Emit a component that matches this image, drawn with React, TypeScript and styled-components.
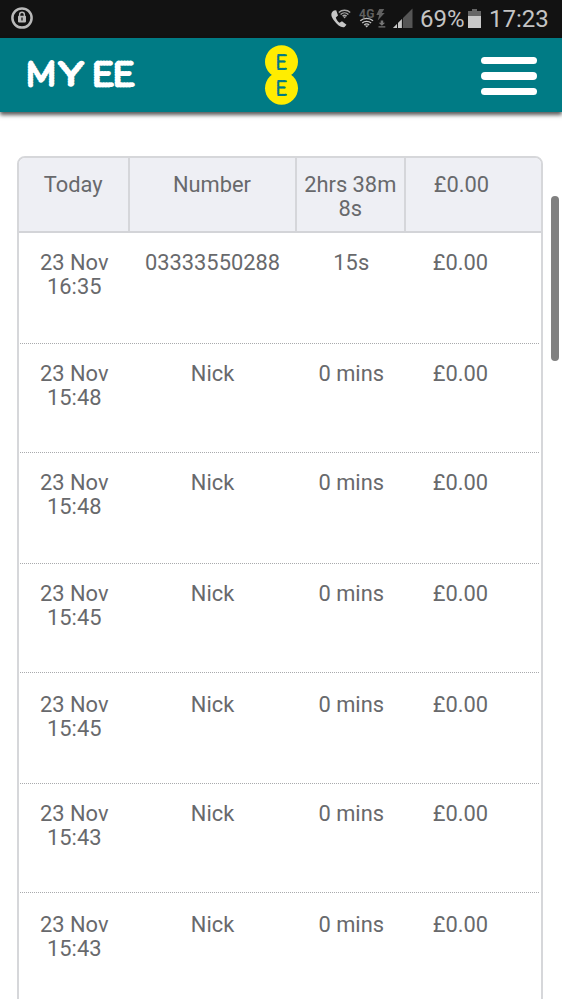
import React from 'react';
import styled, { createGlobalStyle } from 'styled-components';

const GlobalStyle = createGlobalStyle`
  * { box-sizing: border-box; }
  body { margin: 0; background: #fff; overflow: hidden; }
`;

const Screen = styled.div`
  position: relative;
  width: 562px;
  height: 999px;
  overflow: hidden;
  background: #fff;
  color: #68696c;
  font-family: Roboto, sans-serif;
`;

const StatusBar = styled.div`
  display: flex;
  align-items: center;
  height: 38px;
  padding: 0 14px 2px 11px;
  background: #121212;
  color: #c4c4c4;
`;

const StatusIcons = styled.svg`
  display: block;
  margin: 2px 0 0 auto;
`;

const StatusText = styled.span<{ $width: number }>`
  width: ${p => p.$width}px;
  margin-top: 2px;
  font-size: 24px;
  line-height: 36px;
  white-space: nowrap;
`;

const Battery = styled.svg`
  margin: 1px 8px 0 4px;
`;

const AppBar = styled.header`
  display: flex;
  align-items: center;
  justify-content: space-between;
  height: 74px;
  padding: 0 25px 0 20px;
  background: #007b85;
  box-shadow: 0 3px 4px rgba(0, 0, 0, 0.65);
`;

const LogoSlot = styled.div<{ $width: number; $shift?: number }>`
  width: ${p => p.$width}px;
  margin-left: ${p => p.$shift ?? 0}px;
  height: 74px;
  svg { display: block; }
`;

const MenuButton = styled.button`
  display: flex;
  flex-direction: column;
  gap: 8px;
  width: 56px;
  margin: 2px 0 0;
  padding: 0;
  border: 0;
  background: none;
`;

const MenuLine = styled.span`
  height: 7.6px;
  border-radius: 4px;
  background: #fff;
`;

const CallTable = styled.main`
  width: 526px;
  height: 860px;
  margin: 44px 0 0 17px;
  border: 2px solid #d6d7da;
  border-radius: 8px 8px 0 0;
  overflow: hidden;
`;

const columns = '110.5px 167px 109.5px 112px';

const HeaderRow = styled.div`
  display: grid;
  grid-template-columns: ${columns};
  height: 75px;
  background: #eeeff4;
  border-bottom: 2px solid #d3d4d8;
`;

const Row = styled.div<{ $height: number }>`
  display: grid;
  grid-template-columns: ${columns};
  height: ${p => p.$height}px;
  margin: 0 2px 0 1px;
  border-bottom: 1px dotted #a9aaad;
`;

const Cell = styled.div<{ $header?: boolean; $last?: boolean }>`
  padding: ${p => (p.$header ? '15px 4px 0' : '18px 15px 0')};
  padding-right: ${p => (p.$last ? '5px' : '4px')};
  border-right: ${p => (p.$header && !p.$last ? '2px solid #d5d6da' : '0')};
  font-size: 21.85px;
  line-height: 23.5px;
  text-align: center;
`;

const CallCell = styled(Cell)<{ $low?: boolean }>`
  padding: ${p => (p.$low ? 20 : 18)}px 15.5px 0 13.5px;
`;

const NumberCell = styled(CallCell)`
  padding-left: 0;
  padding-right: 3px;
`;

const PriceCell = styled(CallCell)`
  padding-right: 17px;
  padding-left: 12px;
`;

const ScrollThumb = styled.div`
  position: absolute;
  top: 196px;
  right: 3px;
  width: 8px;
  height: 165px;
  border-radius: 4px;
  background: #808080;
`;

const calls = [
  { time: '16:35', who: '03333550288', length: '15s', height: 111 },
  { time: '15:48', who: 'Nick', length: '0 mins', height: 109 },
  { time: '15:48', who: 'Nick', length: '0 mins', height: 111 },
  { time: '15:45', who: 'Nick', length: '0 mins', height: 109 },
  { time: '15:45', who: 'Nick', length: '0 mins', height: 111, low: true },
  { time: '15:43', who: 'Nick', length: '0 mins', height: 109 },
  { time: '15:43', who: 'Nick', length: '0 mins', height: 111, low: true },
];

const LockIcon = () => (
  <svg width="22" height="22" viewBox="0 0 22 22">
    <circle cx="11" cy="11" r="9.6" fill="none" stroke="#b9b9b9" strokeWidth="2.5" />
    <path d="M8.6 9V7.7a2.4 2.4 0 0 1 4.8 0V9" fill="none" stroke="#b9b9b9" strokeWidth="1.4" />
    <rect x="7" y="8.8" width="8" height="6.6" rx=".8" fill="#b9b9b9" />
    <path d="M11 10.5v3" stroke="#222" strokeWidth="1.4" />
  </svg>
);

const SignalIcons = () => (
  <StatusIcons width="90" height="38" viewBox="330 0 90 38">
    <path
      d="M334 10.5 C330.5 12.5 330.5 16 334 20.5 C337.5 25.5 341.5 28 344.5 27 L346.5 24.7 L342 21.2 L339.5 22.8 C337.8 21.7 336.3 19.5 335.8 17.6 L338 15.6 L336.2 10.2Z"
      fill="#c6c6c6"
    />
    <g fill="none" stroke="#a7a7a7" strokeWidth="1.4">
      <path d="M338.8 12.5c3.2-3 8.2-3 11.4 0M340.6 14.4c2.2-2 5.6-2 7.8 0M342.6 16.1c1.2-1 2.8-1 4 0" />
    </g>
    <path d="M343 16.5h3.2l-1.6 1.9z" fill="#a7a7a7" />
    <text x="359" y="18" fill="#5f5f5f" fontFamily="Roboto" fontWeight="700" fontSize="12" textLength="15.5">4G</text>
    <g fill="none" stroke="#c4c4c4" strokeWidth="1.35">
      <path d="M360.3 20.7c3.5-3.2 9.2-3.2 12.7 0M362.2 22.9c2.4-2.1 6.5-2.1 8.9 0M364.2 24.9c1.4-1.2 3.6-1.2 5 0" />
    </g>
    <path d="M364.9 25.6h3.6l-1.8 2z" fill="#c4c4c4" />
    <path d="M379.3 9h5l-2.5 4h2.9l-7 7.5 1.5-5.4h-2.9z" fill="#606060" />
    <path d="M380.7 20.5h2.5v2.2h1.9l-3.2 3-3.2-3h2zM378.5 26.3h6.8v1.3h-6.8z" fill="#777" />
    <path d="M393 28 L412.5 8.5V28z" fill="#555" />
    <path d="M393 28 L402 19V28z" fill="#c7c7c7" />
    <path d="M397.5 20v8M402.4 16v12" stroke="#121212" />
  </StatusIcons>
);

const EeLogo = () => (
  <svg width="36" height="74" viewBox="263 38 36 74">
    <g fill="#ffed00">
      <circle cx="281.5" cy="61.7" r="16.5" />
      <circle cx="281.5" cy="88.2" r="16.5" />
    </g>
    <g
      fill="#007b85"
      stroke="#007b85"
      strokeWidth="2.1"
      strokeLinecap="round"
      strokeDasharray="0 1.6"
      fontFamily="Lato"
      fontWeight="100"
      fontSize="19.5"
    >
      <text x="275.7" y="69" textLength="11" lengthAdjust="spacingAndGlyphs">E</text>
      <text x="275.7" y="94.6" textLength="11" lengthAdjust="spacingAndGlyphs">E</text>
    </g>
  </svg>
);

const MyEeLogo = () => (
  <svg width="124" height="74" viewBox="20 38 124 74">
    <g
      fill="#fff"
      stroke="#fff"
      strokeWidth="4.9"
      strokeLinecap="round"
      strokeDasharray="0 2.6"
      fontFamily="Lato"
      fontWeight="100"
      fontSize="31.5"
    >
      <text x="26.5" y="85.2" textLength="29" lengthAdjust="spacingAndGlyphs">M</text>
      <text x="59.7" y="85.2" textLength="22.5" lengthAdjust="spacingAndGlyphs">Y</text>
      <text x="92.5" y="85.2" textLength="41.5" lengthAdjust="spacingAndGlyphs">EE</text>
    </g>
  </svg>
);

export default function App() {
  return (
    <Screen>
      <GlobalStyle />
      <StatusBar>
        <LockIcon />
        <SignalIcons />
        <StatusText $width={44}>69%</StatusText>
        <Battery width="13" height="19" viewBox="0 0 13 19">
          <path d="M4 0h5v2h4v17H0V2h4z" fill="#666" />
          <path d="M0 7h13v12H0z" fill="#c8c8c8" />
        </Battery>
        <StatusText $width={59}>17:23</StatusText>
      </StatusBar>
      <AppBar>
        <LogoSlot $width={124}><MyEeLogo /></LogoSlot>
        <LogoSlot $width={36} $shift={-63}><EeLogo /></LogoSlot>
        <MenuButton aria-label="Menu">
          <MenuLine />
          <MenuLine />
          <MenuLine />
        </MenuButton>
      </AppBar>
      <CallTable>
        <HeaderRow>
          <Cell $header>Today</Cell>
          <Cell $header>Number</Cell>
          <Cell $header>2hrs 38m 8s</Cell>
          <Cell $header $last>£0.00</Cell>
        </HeaderRow>
        {calls.map((call, i) => (
          <Row key={i} $height={call.height}>
            <CallCell $low={call.low}>23 Nov {call.time}</CallCell>
            <NumberCell $low={call.low}>{call.who}</NumberCell>
            <CallCell $low={call.low}>{call.length}</CallCell>
            <PriceCell $low={call.low}>£0.00</PriceCell>
          </Row>
        ))}
      </CallTable>
      <ScrollThumb />
    </Screen>
  );
}
